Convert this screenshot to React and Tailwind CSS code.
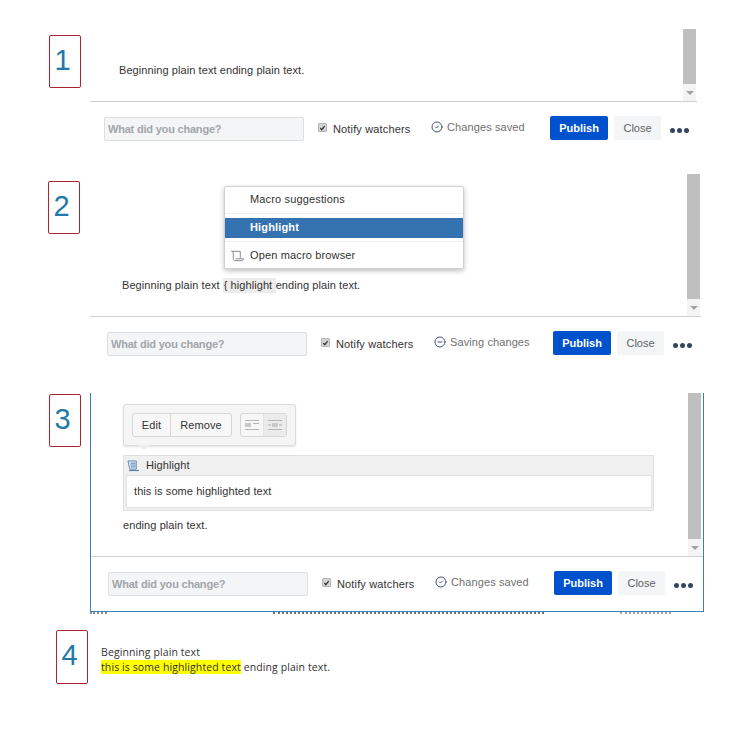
import React from "react";
import { CircleCheck, CircleMinus } from "lucide-react";

const NumberBox = ({ n, className = "" }) => (
  <div
    className={`w-[32px] h-[53px] shrink-0 flex items-center justify-center pr-[5px] pb-[2px] border border-[#a9252f] rounded-[2px] text-[#2279a8] text-[29px] bg-white ${className}`}
  >
    {n}
  </div>
);

const Scrollbar = ({ thumb, className = "" }) => (
  <div className={`w-[13px] shrink-0 flex flex-col ${className}`}>
    <div className="bg-[#bfbfbf]" style={{ height: thumb }} />
    <div className="flex-1 bg-[#f4f4f4] flex items-center justify-center">
      <div className="w-0 h-0 border-x-[4px] border-x-transparent border-t-[4px] border-t-[#a3a3a3]" />
    </div>
  </div>
);

// bottom bar of the editor, same in all three shots
const Footer = ({ status, saving = false, className = "" }) => (
  <div className={`flex items-start ${className}`}>
    <div className="w-[200px] h-[24px] mt-px flex items-center px-[3px] bg-[#f4f5f7] border border-[#dcdee1] rounded-[2px] text-[11px] font-bold text-[#a2a5aa] tracking-[-0.2px]">
      What did you change?
    </div>
    <div className="w-[9px] h-[9px] ml-[14px] mt-[7px] bg-[#d4d4d4] border border-[#b5b5b5] rounded-[1px] flex items-center justify-center">
      <svg viewBox="0 0 10 10" className="w-[8px] h-[8px]">
        <path d="M2 5l2 2.4L8 2.4" fill="none" stroke="#333" strokeWidth="1.8" />
      </svg>
    </div>
    <span className="ml-[6px] mt-[6px] text-[11px] leading-[14px] text-[#333] tracking-[0.15px] w-[77px] whitespace-nowrap">
      Notify watchers
    </span>
    <div className="ml-[21px] mt-[4px] flex items-center gap-[4px] text-[11px] leading-[14px] text-[#707070] tracking-[0.1px] w-[119px] whitespace-nowrap">
      {saving ? (
        <CircleMinus className="w-[12px] h-[12px] text-[#44546f] shrink-0" strokeWidth={2} />
      ) : (
        <CircleCheck className="w-[12px] h-[12px] text-[#44546f] shrink-0" strokeWidth={2} />
      )}
      {status}
    </div>
    <div className="w-[58px] h-[24px] bg-[#0052cc] rounded-[2px] text-white text-[11px] font-bold flex items-center justify-center">
      Publish
    </div>
    <div className="w-[47px] h-[24px] ml-[6px] bg-[#f4f5f7] rounded-[2px] text-[#5e6063] text-[11px] flex items-center justify-center">
      Close
    </div>
    <div className="ml-[9px] mt-[12px] flex gap-[2px]">
      <div className="w-[5px] h-[5px] rounded-full bg-[#344563]" />
      <div className="w-[5px] h-[5px] rounded-full bg-[#344563]" />
      <div className="w-[5px] h-[5px] rounded-full bg-[#344563]" />
    </div>
  </div>
);

const ScrollIcon = () => (
  <svg viewBox="0 0 14 12" className="w-[13px] h-[12px]" fill="none" stroke="#7d8288" strokeWidth="1">
    <path d="M.5 1h9.500v7M.5 1c1.300 0 2 .8 2 1.800V9c0 1.100.8 2 1.900 2h7.600c1 0 1.500-.9 1.500-2H4.800" />
  </svg>
);

const BlueScrollIcon = () => (
  <svg viewBox="0 0 14 13" className="w-[13px] h-[12px]">
    <path d="M1 1h9v9H3z" fill="#d9e5f2" stroke="#5c86b0" />
    <path d="M2 11h11v1H2z" fill="#3f6c99" />
    <path d="M4 3.500h5M4 5.500h5M4 7.500h5" stroke="#5c86b0" />
  </svg>
);

const AlignIcon = ({ center }) => (
  <svg viewBox="0 0 14 10" className="w-[14px] h-[10px]" stroke="#b4b4b4" fill="none">
    <path d="M0 .5h14M0 9.500h14" />
    {center ? <path d="M0 5h3M11 5h3" /> : <path d="M8 3.500h6" />}
    <rect x={center ? 4 : 0} y="3" width="6" height="4" fill="#c9c9c9" stroke="none" />
  </svg>
);

export default function App() {
  return (
    <div className="w-[732px] h-[746px] bg-white overflow-hidden text-[#333] font-['Liberation_Sans',Arial,sans-serif]">
      {/* 1 */}
      <div className="flex pt-[29px] pl-[49px]">
        <NumberBox n="1" className="mt-[6px]" />
        <div className="w-[607px] ml-[9px]">
          <div className="h-[73px] flex justify-between border-b border-[#cfcfcf]">
            <p className="ml-[29px] mt-[34px] text-[11px] leading-[14px] tracking-[0.08px]">
              Beginning plain text ending plain text.
            </p>
            <Scrollbar thumb={55} className="mr-px" />
          </div>
          <Footer status="Changes saved" className="mt-[14px] ml-[14px]" />
        </div>
      </div>

      {/* 2 */}
      <div className="flex mt-[32px] pl-[48px]">
        <NumberBox n="2" className="mt-[8px]" />
        <div className="w-[611px] ml-[10px]">
          <div className="h-[144px] flex justify-between border-b border-[#cfcfcf]">
            <div className="ml-[32px]">
              <div className="ml-[102px] mt-[13px] w-[240px] h-[83px] bg-white border border-[#d0d0d0] rounded-[2px] shadow-[0_2px_5px_rgba(0,0,0,0.25)] text-[11px] text-[#333] tracking-[0.15px]">
                <div className="h-[27px] pl-[25px] pb-[2px] flex items-center border-b border-[#f0f0f0]">
                  Macro suggestions
                </div>
                <div className="h-[20px] mt-[4px] pl-[25px] pb-[1px] flex items-center bg-[#3572b0] text-white font-bold">
                  Highlight
                </div>
                <div className="h-[28px] mt-[3px] pl-[6px] flex items-center gap-[6px] border-t border-[#f0f0f0]">
                  <ScrollIcon />
                  Open macro browser
                </div>
              </div>
              <p className="mt-[8px] flex items-center text-[11px] h-[16px] tracking-[0.08px] whitespace-nowrap">
                Beginning plain text
                <span className="ml-[3px] px-[1px] w-[53px] bg-[#ececec] h-[15px] leading-[15px]">{"{ "}highlight</span>
                ending plain text.
              </p>
            </div>
            <Scrollbar thumb={125} className="mt-px mr-px" />
          </div>
          <Footer status="Saving changes" saving className="mt-[14px] ml-[17px]" />
        </div>
      </div>

      {/* 3 */}
      <div className="flex mt-[37px] pl-[49px]">
        <NumberBox n="3" className="mt-px" />
        <div className="ml-[9px]">
          <div className="w-[614px] h-[219px] border-x border-b border-[#3b7fb8]">
            <div className="h-[164px] flex justify-between border-b border-[#cfcfcf]">
              <div className="ml-[32px] w-[531px]">
                <div className="relative mt-[11px] w-[173px] h-[42px] pl-[8px] flex items-center gap-[8px] bg-[#f5f5f5] border border-[#dcdcdc] rounded-[3px] shadow-[0_1px_2px_rgba(0,0,0,0.12)] text-[11px] tracking-[0.1px]">
                  <div className="flex h-[24px] border border-[#d6d6d6] rounded-[3px] bg-[#f7f7f7]">
                    <div className="w-[38px] pt-px flex items-center justify-center border-r border-[#d6d6d6]">Edit</div>
                    <div className="w-[60px] pt-px flex items-center justify-center">Remove</div>
                  </div>
                  <div className="flex h-[24px] border border-[#d6d6d6] rounded-[3px] bg-[#f7f7f7]">
                    <div className="w-[23px] flex items-center justify-center border-r border-[#e4e4e4]">
                      <AlignIcon />
                    </div>
                    <div className="w-[22px] flex items-center justify-center bg-[#ebebeb]">
                      <AlignIcon center />
                    </div>
                  </div>
                  <div className="absolute left-[14px] top-[40px] w-0 h-0 border-x-[6px] border-x-transparent border-t-[5px] border-t-[#eeeeee]" />
                </div>
                <div className="mt-[9px] h-[56px] border border-[#e0e0e0] bg-[#f0f0f0]">
                  <div className="h-[19px] pl-[3px] flex items-center gap-[6px] text-[11px] tracking-[0.1px]">
                    <BlueScrollIcon />
                    Highlight
                  </div>
                  <div className="h-[33px] ml-[2px] mr-px flex items-center pl-[7px] bg-white border border-[#e2e2e2] text-[11px] tracking-[0.08px]">
                    this is some highlighted text
                  </div>
                </div>
                <p className="mt-[7px] text-[11px] leading-[14px] tracking-[0.08px]">ending plain text.</p>
              </div>
              <Scrollbar thumb={146} className="mr-[2px]" />
            </div>
            <Footer status="Changes saved" className="mt-[14px] ml-[17px]" />
          </div>
          {/* scraps of the page behind the dialog */}
          <div className="flex h-[2px]">
            <div className="w-[17px] border-t-2 border-dotted border-[#8a8f96]" />
            <div className="w-[271px] ml-[166px] border-t-2 border-dotted border-[#6c7380]" />
            <div className="w-[51px] ml-[76px] border-t-2 border-dotted border-[#a4a9b0]" />
          </div>
        </div>
      </div>

      {/* 4 */}
      <div className="flex mt-[16px] pl-[56px]">
        <NumberBox n="4" className="h-[54px]" />
        <div className="ml-[13px] mt-[15px] text-[10.5px] leading-[15px] text-[#333] font-['Open_Sans',sans-serif] tracking-[0.1px]">
          <p>Beginning plain text</p>
          <p>
            <span className="bg-[#ffff00]">this is some highlighted text</span> ending plain text.
          </p>
        </div>
      </div>
    </div>
  );
}
